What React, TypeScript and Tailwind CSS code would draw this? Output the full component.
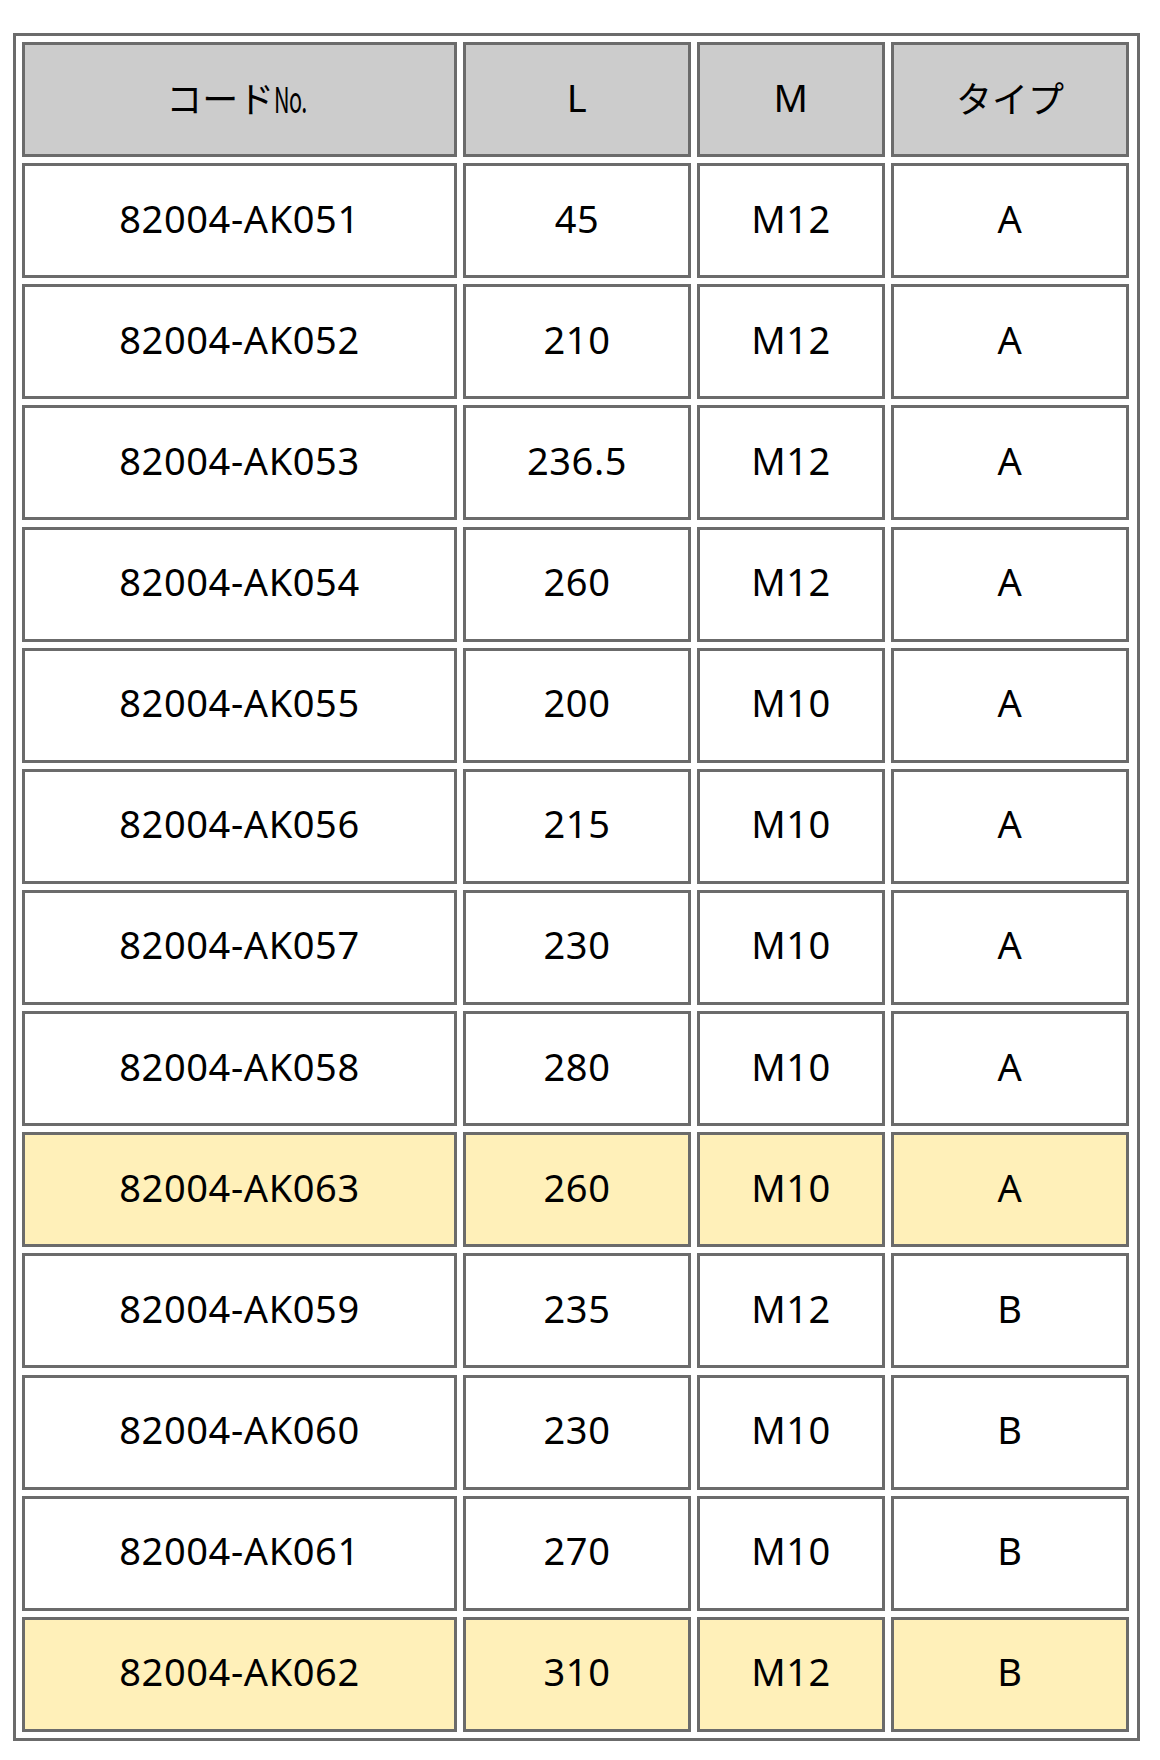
const rows: { code: string; l: string; m: string; type: string; hl?: boolean }[] = [
  { code: "82004-AK051", l: "45", m: "M12", type: "A" },
  { code: "82004-AK052", l: "210", m: "M12", type: "A" },
  { code: "82004-AK053", l: "236.5", m: "M12", type: "A" },
  { code: "82004-AK054", l: "260", m: "M12", type: "A" },
  { code: "82004-AK055", l: "200", m: "M10", type: "A" },
  { code: "82004-AK056", l: "215", m: "M10", type: "A" },
  { code: "82004-AK057", l: "230", m: "M10", type: "A" },
  { code: "82004-AK058", l: "280", m: "M10", type: "A" },
  { code: "82004-AK063", l: "260", m: "M10", type: "A", hl: true },
  { code: "82004-AK059", l: "235", m: "M12", type: "B" },
  { code: "82004-AK060", l: "230", m: "M10", type: "B" },
  { code: "82004-AK061", l: "270", m: "M10", type: "B" },
  { code: "82004-AK062", l: "310", m: "M12", type: "B", hl: true },
];

function Cell({ children, bg }: { children: React.ReactNode; bg: string }) {
  return (
    <div className={`flex items-center justify-center h-[115px] pb-[6px] border-[3px] border-[#6b6b6b] ${bg}`}>
      {children}
    </div>
  );
}

export default function App() {
  return (
    <div
      className="w-[1160px] min-h-[1760px] bg-white pt-[33px] pl-[13px] text-black text-[38px] leading-none tracking-[0.6px]"
      style={{ fontFamily: '"Noto Sans", "Noto Sans CJK JP", sans-serif' }}
    >
      <div className="w-[1127px] border-[3px] border-[#6b6b6b] p-[6px] grid grid-cols-[435px_228px_188px_238px] gap-x-[6px] gap-y-[6.15px]">
        <Cell bg="bg-[#cccccc]">
          <span className="font-['Noto_Sans_CJK_JP'] text-[36px] tracking-normal">
            コード<span className="inline-block scale-x-[0.6] origin-left -mr-[16px] tracking-[-1px]">No.</span>
          </span>
        </Cell>
        <Cell bg="bg-[#cccccc]">L</Cell>
        <Cell bg="bg-[#cccccc]">M</Cell>
        <Cell bg="bg-[#cccccc]">
          <span className="font-['Noto_Sans_CJK_JP'] text-[36px] tracking-normal">タイプ</span>
        </Cell>
        {rows.map((r) => {
          const bg = r.hl ? "bg-[#fff0b9]" : "bg-white";
          return [
            <Cell key={r.code + "c"} bg={bg}>{r.code}</Cell>,
            <Cell key={r.code + "l"} bg={bg}>{r.l}</Cell>,
            <Cell key={r.code + "m"} bg={bg}>{r.m}</Cell>,
            <Cell key={r.code + "t"} bg={bg}>{r.type}</Cell>,
          ];
        })}
      </div>
    </div>
  );
}
